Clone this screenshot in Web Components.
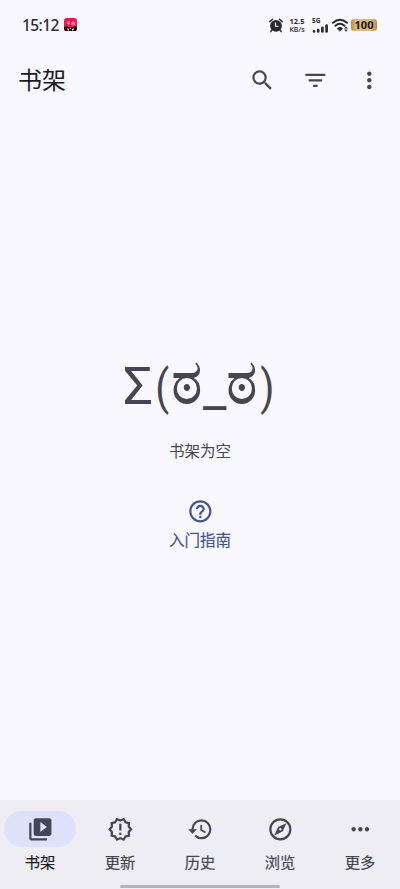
<!DOCTYPE html>
<html lang="zh-CN">
<head>
<meta charset="utf-8">
<title>书架</title>
<style>
html,body{margin:0;height:100%}
body{background:#faf8ff;font-family:"Noto Sans","Noto Sans CJK SC",sans-serif;color:#1b1b21;overflow:hidden}
</style>
</head>
<body>
<library-app></library-app>
<script>
const define=(name,html)=>customElements.define(name,class extends HTMLElement{
  constructor(){super();this.attachShadow({mode:'open'}).innerHTML=html;}
});

const ICONS={
  search:'<path d="M15.5 14h-.79l-.28-.27A6.47 6.47 0 0 0 16 9.5 6.5 6.5 0 1 0 9.5 16c1.61 0 3.09-.59 4.23-1.57l.27.28v.79l5 4.99L20.49 19l-4.99-5zm-6 0C7.01 14 5 11.99 5 9.5S7.01 5 9.5 5 14 7.01 14 9.5 11.99 14 9.5 14z"/>',
  filter:'<path d="M10 18h4v-2h-4v2zM3 6v2h18V6H3zm3 7h12v-2H6v2z"/>',
  vert:'<path d="M12 8c1.1 0 2-.9 2-2s-.9-2-2-2-2 .9-2 2 .9 2 2 2zm0 2c-1.1 0-2 .9-2 2s.9 2 2 2 2-.9 2-2-.9-2-2-2zm0 6c-1.1 0-2 .9-2 2s.9 2 2 2 2-.9 2-2-.9-2-2-2z"/>',
  help:'<path d="M11 18h2v-2h-2v2zm1-16C6.48 2 2 6.48 2 12s4.48 10 10 10 10-4.480 10-10S17.520 2 12 2zm0 18c-4.410 0-8-3.590-8-8s3.590-8 8-8 8 3.590 8 8-3.590 8-8 8zm0-14c-2.210 0-4 1.790-4 4h2c0-1.100.9-2 2-2s2 .9 2 2c0 2-3 1.750-3 5h2c0-2.250 3-2.500 3-5 0-2.210-1.790-4-4-4z"/>',
  library:'<path d="M4 6H2v14c0 1.100.9 2 2 2h14v-2H4V6zm16-4H8c-1.100 0-2 .9-2 2v12c0 1.100.9 2 2 2h12c1.100 0 2-.9 2-2V4c0-1.100-.9-2-2-2zm-8 12.500v-9l6 4.500-6 4.500z"/>',
  updates:'<path d="M23 12l-2.440-2.780.34-3.680-3.610-.82-1.890-3.180L12 3 8.600 1.540 6.710 4.720l-3.610.81.34 3.680L1 12l2.440 2.780-.34 3.690 3.610.82 1.890 3.180L12 21l3.400 1.460 1.890-3.180 3.610-.82-.34-3.680L23 12zm-4.510 2.110.26 2.790-2.740.62-1.430 2.410L12 18.820l-2.580 1.110-1.430-2.410-2.740-.62.26-2.800L3.660 12l1.850-2.120-.26-2.780 2.740-.61 1.430-2.410L12 5.180l2.580-1.110 1.430 2.410 2.740.62-.26 2.790L20.340 12l-1.850 2.110zM11 15h2v2h-2zM11 7h2v6h-2z"/>',
  history:'<path d="M13 3a9 9 0 0 0-9 9H1l3.890 3.890.07.14L9 12H6c0-3.870 3.130-7 7-7s7 3.130 7 7-3.130 7-7 7c-1.930 0-3.680-.79-4.940-2.060l-1.420 1.420A8.954 8.954 0 0 0 13 21a9 9 0 0 0 0-18zm-1 5v5l4.250 2.520.77-1.280-3.520-2.090V8H12z"/>',
  browse:'<path fill-rule="evenodd" d="M12 2a10 10 0 1 0 0 20 10 10 0 0 0 0-20zm0 18a8 8 0 1 1 0-16 8 8 0 0 1 0 16zm-5.500-2.500 7.510-3.490L17.500 6.500 9.990 9.990 6.500 17.500zm5.500-6.600a1.100 1.100 0 1 1 0 2.200 1.100 1.100 0 0 1 0-2.200z"/>',
  more:'<path d="M6 10c-1.100 0-2 .9-2 2s.9 2 2 2 2-.9 2-2-.9-2-2-2zm12 0c-1.100 0-2 .9-2 2s.9 2 2 2 2-.9 2-2-.9-2-2-2zm-6 0c-1.100 0-2 .9-2 2s.9 2 2 2 2-.9 2-2-.9-2-2-2z"/>'
};
customElements.define('md-icon',class extends HTMLElement{
  constructor(){super();this.attachShadow({mode:'open'});}
  connectedCallback(){
    this.shadowRoot.innerHTML=`<style>:host{display:block;width:26.67px;height:26.67px;flex:none}svg{display:block;width:100%;height:100%;fill:currentColor}</style><svg viewBox="0 0 24 24">${ICONS[this.getAttribute('name')]}</svg>`;
  }
});

define('status-bar',`<style>
:host{display:flex;height:50px;box-sizing:border-box;padding:0 23px 0 22px;align-items:center;color:#2a2a2e}
.time{font:500 15.500px/20px "Noto Sans",sans-serif;letter-spacing:-.6px;width:42px;white-space:nowrap}
.app{width:13px;height:14px}
.gap{flex:1}
.rate{font:700 7.500px/8px "Open Sans","Noto Sans",sans-serif;width:18px;margin:0 3px 0 5px;white-space:nowrap;display:flex;flex-direction:column;align-items:center;gap:1px}
.rate div{line-height:7px}
.rate .u{font-weight:600;font-size:7px}
.net{width:17px;margin-left:3px}
.net span{display:block;font:700 6.500px/7px "Noto Sans",sans-serif}
.wifi{margin-left:3px}
.bat{margin-left:2px;width:26px;height:12px;border-radius:3px;background:linear-gradient(90deg,#b98f45,#e0bd6f 20%,#dfbb6c 75%,#b99149);font:700 11px/12px "Noto Sans",sans-serif;text-align:center;color:#17130b}
svg{display:block;flex:none}
</style>
<span class="time">15:12</span>
<svg class="app" viewBox="0 0 13 14"><rect width="13" height="13" rx="3" fill="#f5144f"/><path d="M0 9q2-1.500 4 0h5q2-1.500 4 0v2q0 2-2 2H2q-2 0-2-2z" fill="#15070b"/><path d="M3 4h3M4.500 4v3M3 5.500h3M8 4h2.500v3H8zM8 5.500h2.500" stroke="#ffb5c7" stroke-width=".7" fill="none"/><path d="M3 11h1.500v1.500M6 10.500h1M8.500 12.500V11H10" stroke="#fff" fill="none"/></svg>
<span class="gap"></span>
<svg width="14" height="15" viewBox="0 0 14 15"><path d="M.8 3.600 3.500 1.200M13.200 3.600l-2.700-2.400M3 12l-1.200 1.600M11 12l1.200 1.600" stroke="#2a2a2e" stroke-width="1.500" stroke-linecap="round"/><circle cx="7" cy="7.800" r="5.900" fill="#2a2a2e"/><path d="M6.500 4.500V8.200H9.500" stroke="#faf8ff" stroke-width="1.100" fill="none"/></svg>
<div class="rate"><div>12.5</div><div class="u">KB/s</div></div>
<div class="net"><span>5G</span><svg width="17" height="9" viewBox="0 0 17 9" stroke="#2a2a2e" stroke-width="2.700" stroke-linecap="round"><path d="M2 7.500v-.1M6.200 7.500V6M10.400 7.500V3.800M14.600 7.500V1.500"/></svg></div>
<svg class="wifi" width="17" height="15" viewBox="0 0 17 15" fill="none" stroke="#2a2a2e" stroke-width="1.900" stroke-linecap="round"><path d="M1 4.800Q8 -1.500 15 4.800M3.300 7.700Q8 3.700 12.500 7.700"/><path d="M5.500 10.300Q8 8.200 10.500 10.300L8 13z" fill="#2a2a2e" stroke-width=".8"/><path d="M14 9v4M12.900 10.200 14 9l1.100 1.200M12.900 12 14 13.200l1.100-1.200" stroke-width=".9"/></svg>
<div class="bat">100</div>`);

define('top-bar',`<style>
:host{display:flex;height:60px;align-items:center;padding:0 17.700px 0 18px}
h1{margin:0;flex:1;font-size:24px;line-height:36px;font-weight:400}
nav{display:flex;gap:26.670px;color:#45464f}
</style><h1><slot></slot></h1><nav><md-icon name="search"></md-icon><md-icon name="filter"></md-icon><md-icon name="vert"></md-icon></nav>`);

define('empty-state',`<style>
:host{display:flex;flex:1;flex-direction:column;align-items:center;color:#45464f}
.face{display:flex;align-items:baseline;justify-content:center;margin-top:243px;height:68px;font:400 52px/68px Roboto,"Noto Sans",sans-serif;white-space:nowrap}
.eye{font-size:60px;line-height:60px;transform:scaleY(1.07);transform-origin:50% 73%}
.paren{font-size:48px;padding:0 .5px 0 1px;transform:scaleX(.85)}
.mouth{transform:translateY(1.500px)}
.msg{margin-top:19px;font-size:15.500px;line-height:22px}
.help{display:flex;flex-direction:column;align-items:center;margin-top:36px;color:#435391;font-size:15.500px;line-height:22px;gap:4px;-webkit-text-stroke:.2px #435391}
</style><div class="face"><span>Σ</span><span class="paren">(</span><span class="eye">ಠ</span><span class="mouth">_</span><span class="eye">ಠ</span><span class="paren">)</span></div><div class="msg"><slot></slot></div><div class="help"><md-icon name="help"></md-icon><slot name="action"></slot></div>`);

define('nav-item',`<style>
:host{display:flex;flex:1;flex-direction:column;align-items:center;color:#45464f}
.pill{display:flex;align-items:center;justify-content:center;width:71.400px;height:36px;border-radius:18px}
.label{margin-top:4px;font-size:15.300px;line-height:22px;-webkit-text-stroke:.2px currentColor}
:host([selected]) .pill{background:#dde1f9;color:#414659}
:host([selected]) .label{color:#1b1b21}
</style><div class="pill"><slot name="icon"></slot></div><div class="label"><slot></slot></div>`);

define('nav-bar',`<style>
:host{display:flex;flex-direction:column;height:89px;box-sizing:border-box;background:#eeedf4;padding-top:11px;align-items:center}
.row{display:flex;width:100%;height:74px;flex:none}
.handle{width:160px;height:3px;border-radius:2px;background:#b4b3b9}
</style><div class="row"><slot></slot></div><div class="handle"></div>`);

define('library-app',`<style>:host{display:flex;flex-direction:column;width:400px;height:889px;background:#faf8ff}</style>
<status-bar></status-bar><top-bar>书架</top-bar>
<empty-state>书架为空<span slot="action">入门指南</span></empty-state>
<nav-bar>
<nav-item selected><md-icon slot="icon" name="library"></md-icon>书架</nav-item>
<nav-item><md-icon slot="icon" name="updates"></md-icon>更新</nav-item>
<nav-item><md-icon slot="icon" name="history"></md-icon>历史</nav-item>
<nav-item><md-icon slot="icon" name="browse"></md-icon>浏览</nav-item>
<nav-item><md-icon slot="icon" name="more"></md-icon>更多</nav-item>
</nav-bar>`);
</script>
</body>
</html>
